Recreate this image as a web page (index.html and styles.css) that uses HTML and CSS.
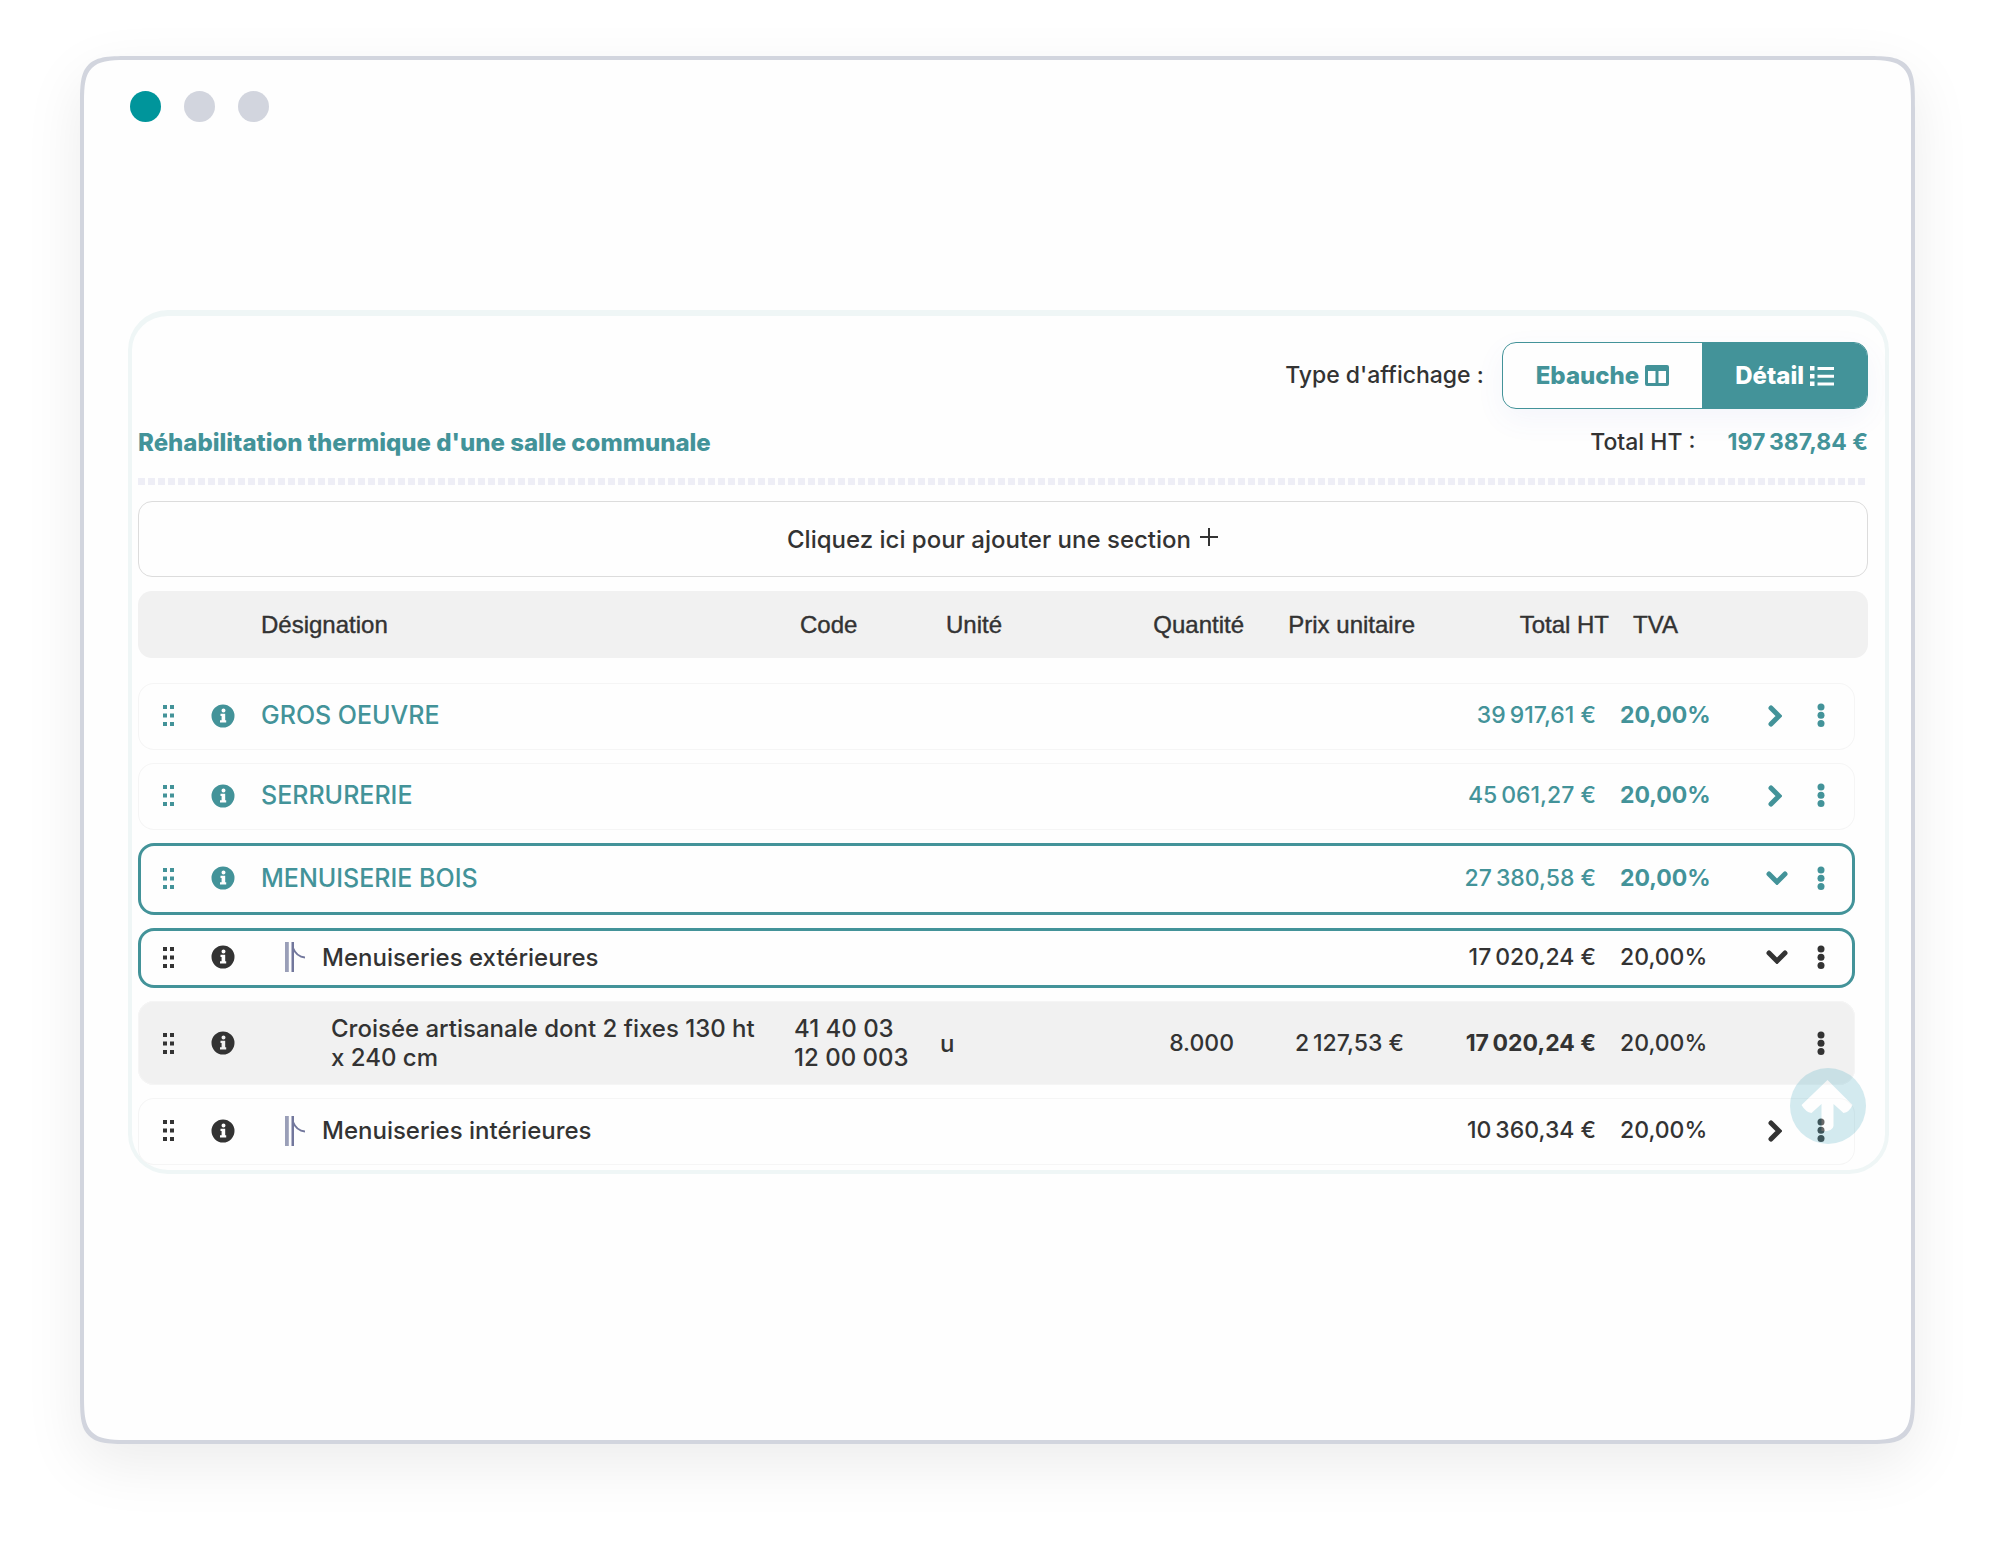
FILE: index.html
```html
<!DOCTYPE html>
<html lang="fr">
<head>
<meta charset="utf-8">
<meta name="viewport" content="width=device-width, initial-scale=1">
<title>Réhabilitation thermique d'une salle communale</title>
<link rel="stylesheet" href="styles.css">
</head>
<body>
<svg class="sprite" aria-hidden="true">
  <symbol id="grip" viewBox="0 0 11 21"><path d="M0 0h4v4H0zM7 0h4v4H7zM0 8.500h4v4H0zM7 8.500h4v4H7zM0 17h4v4H0zM7 17h4v4H7z"/></symbol>
  <symbol id="info" viewBox="0 0 24 24"><path fill-rule="evenodd" d="M12 .5a11.500 11.500 0 1 0 0 23 11.500 11.500 0 0 0 0-23zM12.500 4.500a2 2 0 1 1 0 4 2 2 0 0 1 0-4zM9.500 9.800h4.700v6.400h1v2.300H9v-2.300h1.600v-4.100H9.500z"/></symbol>
  <symbol id="chevron-right" viewBox="0 0 14 22"><path d="M3 3l8 8-8 8" fill="none" stroke="currentColor" stroke-width="5" stroke-linecap="round"/></symbol>
  <symbol id="chevron-down" viewBox="0 0 22 14"><path d="M3 3l8 8 8-8" fill="none" stroke="currentColor" stroke-width="5" stroke-linecap="round"/></symbol>
  <symbol id="dots" viewBox="0 0 8 25"><circle cx="4" cy="4" r="3.500"/><circle cx="4" cy="12.200" r="3.500"/><circle cx="4" cy="20.400" r="3.500"/></symbol>
  <symbol id="branch" viewBox="0 0 20 30"><path d="M0 0h3.800v30H0z" fill="#9a9fb8"/><path d="M6.500 0h2.500v30H6.500z" fill="#72779c"/><path d="M8 6c2 5 6 9 12 9.500" fill="none" stroke="#72779c" stroke-width="2"/></symbol>
</svg>

<main class="window">
  <div class="window-dots" aria-hidden="true">
    <span class="dot dot-active"></span><span class="dot"></span><span class="dot"></span>
  </div>

  <section class="panel">
    <div class="display-type">
      <span id="display-label">Type d'affichage :</span>
      <div class="toggle" role="group" aria-labelledby="display-label">
        <button type="button" class="toggle-option" aria-pressed="false">Ebauche
          <svg width="24" height="21" viewBox="0 0 24 21" aria-hidden="true"><path fill="currentColor" fill-rule="evenodd" d="M2 0h20a2 2 0 0 1 2 2v17a2 2 0 0 1-2 2H2a2 2 0 0 1-2-2V2a2 2 0 0 1 2-2zm1 6v12h7.500V6zm10.500 0v12H21V6z"/></svg>
        </button>
        <button type="button" class="toggle-option toggle-selected" aria-pressed="true">Détail
          <svg width="24" height="20" viewBox="0 0 24 20" aria-hidden="true"><path fill="currentColor" d="M0 0h4.500v4.500H0zM0 8h4.500v4.500H0zM0 15.500h4.500V20H0zM7.500 1H24v3H7.500zM7.500 8.700H24v3H7.500zM7.500 16.500H24v3H7.500z"/></svg>
        </button>
      </div>
    </div>

    <div class="summary">
      <h1 class="title">Réhabilitation thermique d'une salle communale</h1>
      <div class="total"><span>Total HT :</span><strong class="total-value">197&#8239;387,84 €</strong></div>
    </div>

    <button type="button" class="add-section">Cliquez ici pour ajouter une section
      <svg width="20" height="24" viewBox="0 0 20 24" aria-hidden="true"><path d="M10 1v18M1 10h18" stroke="currentColor" stroke-width="2"/></svg>
    </button>

    <table class="quote">
      <thead>
        <tr class="head-row">
          <th></th><th></th><th class="name">Désignation</th><th>Code</th><th>Unité</th><th class="num">Quantité</th><th class="num">Prix unitaire</th><th class="num">Total HT</th><th class="vat">TVA</th><th></th><th></th>
        </tr>
      </thead>
      <tbody>
        <tr class="row row-section">
          <td class="tool"><button type="button" aria-label="Déplacer"><svg width="11" height="21"><use href="#grip"/></svg></button></td>
          <td class="tool"><button type="button" aria-label="Informations"><svg width="24" height="24"><use href="#info"/></svg></button></td>
          <td class="name">GROS OEUVRE</td><td></td><td></td><td></td><td></td>
          <td class="num">39&#8239;917,61 €</td><td class="vat">20,00%</td>
          <td class="tool"><button type="button" aria-label="Déplier"><svg width="14" height="22"><use href="#chevron-right"/></svg></button></td>
          <td class="tool"><button type="button" aria-label="Actions"><svg width="8" height="25"><use href="#dots"/></svg></button></td>
        </tr>
        <tr class="row row-section">
          <td class="tool"><button type="button" aria-label="Déplacer"><svg width="11" height="21"><use href="#grip"/></svg></button></td>
          <td class="tool"><button type="button" aria-label="Informations"><svg width="24" height="24"><use href="#info"/></svg></button></td>
          <td class="name">SERRURERIE</td><td></td><td></td><td></td><td></td>
          <td class="num">45&#8239;061,27 €</td><td class="vat">20,00%</td>
          <td class="tool"><button type="button" aria-label="Déplier"><svg width="14" height="22"><use href="#chevron-right"/></svg></button></td>
          <td class="tool"><button type="button" aria-label="Actions"><svg width="8" height="25"><use href="#dots"/></svg></button></td>
        </tr>
        <tr class="row row-section row-open">
          <td class="tool"><button type="button" aria-label="Déplacer"><svg width="11" height="21"><use href="#grip"/></svg></button></td>
          <td class="tool"><button type="button" aria-label="Informations"><svg width="24" height="24"><use href="#info"/></svg></button></td>
          <td class="name">MENUISERIE BOIS</td><td></td><td></td><td></td><td></td>
          <td class="num">27&#8239;380,58 €</td><td class="vat">20,00%</td>
          <td class="tool tool-open"><button type="button" aria-label="Replier"><svg width="22" height="14"><use href="#chevron-down"/></svg></button></td>
          <td class="tool"><button type="button" aria-label="Actions"><svg width="8" height="25"><use href="#dots"/></svg></button></td>
        </tr>
        <tr class="row row-sub row-open">
          <td class="tool"><button type="button" aria-label="Déplacer"><svg width="11" height="21"><use href="#grip"/></svg></button></td>
          <td class="tool"><button type="button" aria-label="Informations"><svg width="24" height="24"><use href="#info"/></svg></button></td>
          <td class="name"><svg class="branch" width="20" height="30" aria-hidden="true"><use href="#branch"/></svg>Menuiseries extérieures</td><td></td><td></td><td></td><td></td>
          <td class="num">17&#8239;020,24 €</td><td class="vat">20,00%</td>
          <td class="tool tool-open"><button type="button" aria-label="Replier"><svg width="22" height="14"><use href="#chevron-down"/></svg></button></td>
          <td class="tool"><button type="button" aria-label="Actions"><svg width="8" height="25"><use href="#dots"/></svg></button></td>
        </tr>
        <tr class="row row-item">
          <td class="tool"><button type="button" aria-label="Déplacer"><svg width="11" height="21"><use href="#grip"/></svg></button></td>
          <td class="tool"><button type="button" aria-label="Informations"><svg width="24" height="24"><use href="#info"/></svg></button></td>
          <td class="name">Croisée artisanale dont 2 fixes 130 ht x 240 cm</td>
          <td>41 40 03<br>12 00 003</td><td>u</td><td class="num">8.000</td><td class="num">2&#8239;127,53 €</td>
          <td class="num"><strong>17&#8239;020,24 €</strong></td><td class="vat">20,00%</td>
          <td></td>
          <td class="tool"><button type="button" aria-label="Actions"><svg width="8" height="25"><use href="#dots"/></svg></button></td>
        </tr>
        <tr class="row row-sub">
          <td class="tool"><button type="button" aria-label="Déplacer"><svg width="11" height="21"><use href="#grip"/></svg></button></td>
          <td class="tool"><button type="button" aria-label="Informations"><svg width="24" height="24"><use href="#info"/></svg></button></td>
          <td class="name"><svg class="branch" width="20" height="30" aria-hidden="true"><use href="#branch"/></svg>Menuiseries intérieures</td><td></td><td></td><td></td><td></td>
          <td class="num">10&#8239;360,34 €</td><td class="vat">20,00%</td>
          <td class="tool"><button type="button" aria-label="Déplier"><svg width="14" height="22"><use href="#chevron-right"/></svg></button></td>
          <td class="tool"><button type="button" aria-label="Actions"><svg width="8" height="25"><use href="#dots"/></svg></button></td>
        </tr>
      </tbody>
    </table>

    <button type="button" class="to-top" aria-label="Haut de page">
      <svg width="76" height="76" viewBox="0 0 76 76" aria-hidden="true"><circle cx="38" cy="38" r="38" fill="#5ab2c6"/><path fill="#fff" d="M37.500 12l25 25q-3 7-9 8L43.500 36v22q-1 6-12 5V36l-10 9q-6-1-10-8z"/></svg>
    </button>
  </section>
</main>
</body>
</html>
```
FILE: styles.css
```css
:root {
  --teal: #439399;
  --ink: #333;
  --frame: #d2d5de;
  --soft: #f1f1f1;
}

* { box-sizing: border-box; }

body {
  margin: 0;
  padding: 56px 80px 105px;
  background: #fff;
  color: var(--ink);
  font: 500 24px/29px "Inter", "Open Sans", sans-serif;
}

button {
  margin: 0;
  padding: 0;
  border: 0;
  background: none;
  color: inherit;
  font: inherit;
  cursor: pointer;
}

svg { display: block; fill: currentColor; flex: none; }
.sprite { position: absolute; width: 0; height: 0; }
strong { font-weight: 700; }

.window {
  min-height: calc(100vh - 161px);
  padding: 31px 22px 44px 44px;
  border: 4px solid var(--frame);
  border-radius: 34px;
  background: #fefefe;
  box-shadow: 0 20px 60px rgba(0, 0, 0, 0.08);
}

@supports (corner-shape: squircle) {
  .window { border-radius: 54px; corner-shape: squircle; }
}

.window-dots { display: flex; gap: 23px; padding-left: 2px; }
.dot { width: 31px; height: 31px; border-radius: 50%; background: var(--frame); }
.dot-active { background: #00959b; }

.panel {
  position: relative;
  margin-top: 188px;
  padding: 26px 17px 5px 6px;
  border: 4px solid #eff6f6;
  border-top-width: 6px;
  border-radius: 40px;
}

.display-type {
  display: flex;
  align-items: center;
  justify-content: flex-end;
  gap: 18px;
  font-size: 23px;
}

.toggle {
  display: flex;
  height: 67px;
  border: 1px solid var(--teal);
  border-radius: 14px;
  overflow: hidden;
  box-shadow: 0 10px 30px rgba(80, 100, 200, 0.06);
}

.toggle-option {
  display: flex;
  align-items: center;
  gap: 6px;
  padding: 0 33px;
  color: var(--teal);
  font-size: 24px;
  font-weight: 800;
}

.toggle-selected { background: var(--teal); color: #fff; }

.summary {
  display: flex;
  align-items: center;
  justify-content: space-between;
  height: 76px;
  padding-bottom: 9px;
  background: repeating-linear-gradient(90deg, #eeeef6 0 7px, transparent 7px 10px) left bottom / 100% 7px no-repeat;
}

.title { margin: 0; color: var(--teal); font-size: 24px; font-weight: 800; }
.total { display: flex; gap: 32px; font-size: 23px; }
.total-value { color: var(--teal); }

.add-section {
  display: flex;
  align-items: center;
  justify-content: center;
  gap: 8px;
  width: 100%;
  height: 76px;
  margin-top: 16px;
  border: 1px solid #dcdcdc;
  border-radius: 14px;
}

.quote { display: block; margin-top: 14px; }
.quote thead { display: block; }

.quote tbody {
  display: flex;
  flex-direction: column;
  gap: 13px;
  margin: 25px 13px 0 0;
}

.head-row, .row { display: grid; align-items: center; }
.quote th, .quote td { padding: 0; text-align: left; }

.head-row {
  grid-template-columns: 60px 50px 1fr 146px 136px 162px 171px 194px 152px 50px 42px;
  height: 67px;
  padding-right: 15px;
  border-radius: 14px;
  background: var(--soft);
  font-family: "Liberation Sans", Arial, sans-serif;
}

.head-row th { font-weight: 400; -webkit-text-stroke: 0.4px; }

.row {
  grid-template-columns: 60px 50px 1fr 146px 134px 160px 170px 192px 154px 50px 42px;
  min-height: 67px;
  padding: 0 13px 2px 0;
  border-radius: 16px;
  box-shadow: inset 0 0 0 1px #f5f5f5;
}

.row-section { color: var(--teal); }
.row-section .name { font-size: 25px; }
.row-section .vat { font-weight: 700; }
.row-open { min-height: 72px; box-shadow: inset 0 0 0 3px var(--teal); }
.row-sub.row-open { min-height: 60px; }
.row-item { min-height: 84px; padding-bottom: 0; background: var(--soft); }

.quote .name { display: flex; align-items: center; padding-left: 13px; }
.quote .row-sub .name { gap: 17px; padding-left: 37px; }
.quote .row-item .name { padding: 0 24px 0 83px; }
.quote .num { text-align: right; }
.quote .vat { padding-left: 24px; }
.row .num, .row .vat { font-size: 23px; }

.tool { display: flex; justify-content: center; }
.quote .tool-open { padding-left: 4px; }

/* Floating over the last rows of the list */
.to-top {
  position: absolute;
  right: 19px;
  bottom: 26px;
  opacity: 0.26;
}
```
